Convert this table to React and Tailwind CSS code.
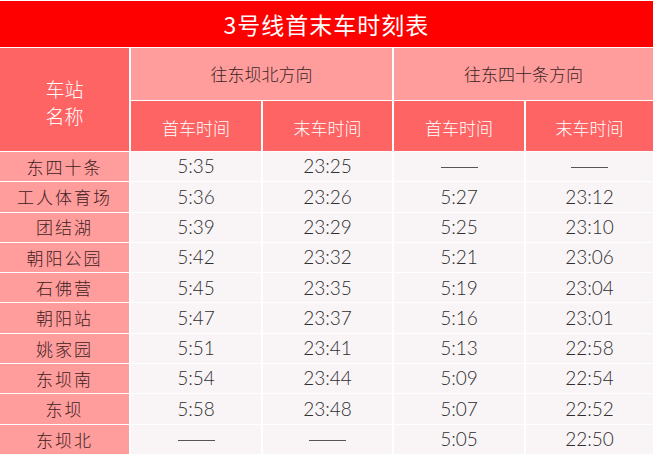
const rows = [
  ["东四十条", "5:35", "23:25", "——", "——"],
  ["工人体育场", "5:36", "23:26", "5:27", "23:12"],
  ["团结湖", "5:39", "23:29", "5:25", "23:10"],
  ["朝阳公园", "5:42", "23:32", "5:21", "23:06"],
  ["石佛营", "5:45", "23:35", "5:19", "23:04"],
  ["朝阳站", "5:47", "23:37", "5:16", "23:01"],
  ["姚家园", "5:51", "23:41", "5:13", "22:58"],
  ["东坝南", "5:54", "23:44", "5:09", "22:54"],
  ["东坝", "5:58", "23:48", "5:07", "22:52"],
  ["东坝北", "——", "——", "5:05", "22:50"],
];

const cjk = { fontFamily: '"Noto Sans CJK SC", "Noto Sans", sans-serif' };
const num = { fontFamily: 'Lato, "Noto Sans CJK SC", sans-serif' };

function TimeCell({ value }) {
  if (value === "——") {
    return (
      <div className="flex items-center justify-center bg-[#f9f5f7] h-[29.3px] pt-[2px]">
        <span className="block w-[37px] h-px bg-[#555]" />
      </div>
    );
  }
  return (
    <div
      className="flex items-center justify-center bg-[#f9f5f7] h-[29.3px] text-[19px] text-[#2e2e2e] font-light"
      style={num}
    >
      {value}
    </div>
  );
}

export default function App() {
  return (
    <div className="w-[654px] h-[461px] bg-white pt-px overflow-hidden font-light" style={cjk}>
      <div className="w-[653px] h-[46px] bg-[#ff0000] flex items-center justify-center text-white text-[23px] tracking-[1px] font-normal">
        3号线首末车时刻表
      </div>

      <div className="mt-px w-[653px] grid grid-cols-[129px_130px_129px_130px_127px] gap-x-[2px] gap-y-px">
        {/* header */}
        <div className="row-span-2 bg-[#ff6464] flex flex-col items-center justify-center text-white text-[19px] leading-[27px] pt-[4px]">
          <span>车站</span>
          <span>名称</span>
        </div>
        <div className="col-span-2 h-[52px] bg-[#ff9c9c] flex items-center justify-center text-[17px] text-[#3a2626]">
          往东坝北方向
        </div>
        <div className="col-span-2 h-[52px] bg-[#ff9c9c] flex items-center justify-center text-[17px] text-[#3a2626]">
          往东四十条方向
        </div>
        {["首车时间", "末车时间", "首车时间", "末车时间"].map((t, i) => (
          <div
            key={i}
            className="h-[50px] bg-[#ff6464] flex items-center justify-center text-white text-[17px] pt-[4px]"
          >
            {t}
          </div>
        ))}

        {/* rows */}
        {rows.map((r) => (
          <div key={r[0]} className="contents">
            <div className="h-[29.3px] bg-[#ff9c9c] flex items-center justify-center text-[17px] text-[#3e2222] tracking-[2px]">
              {r[0]}
            </div>
            <TimeCell value={r[1]} />
            <TimeCell value={r[2]} />
            <TimeCell value={r[3]} />
            <TimeCell value={r[4]} />
          </div>
        ))}
      </div>
    </div>
  );
}
